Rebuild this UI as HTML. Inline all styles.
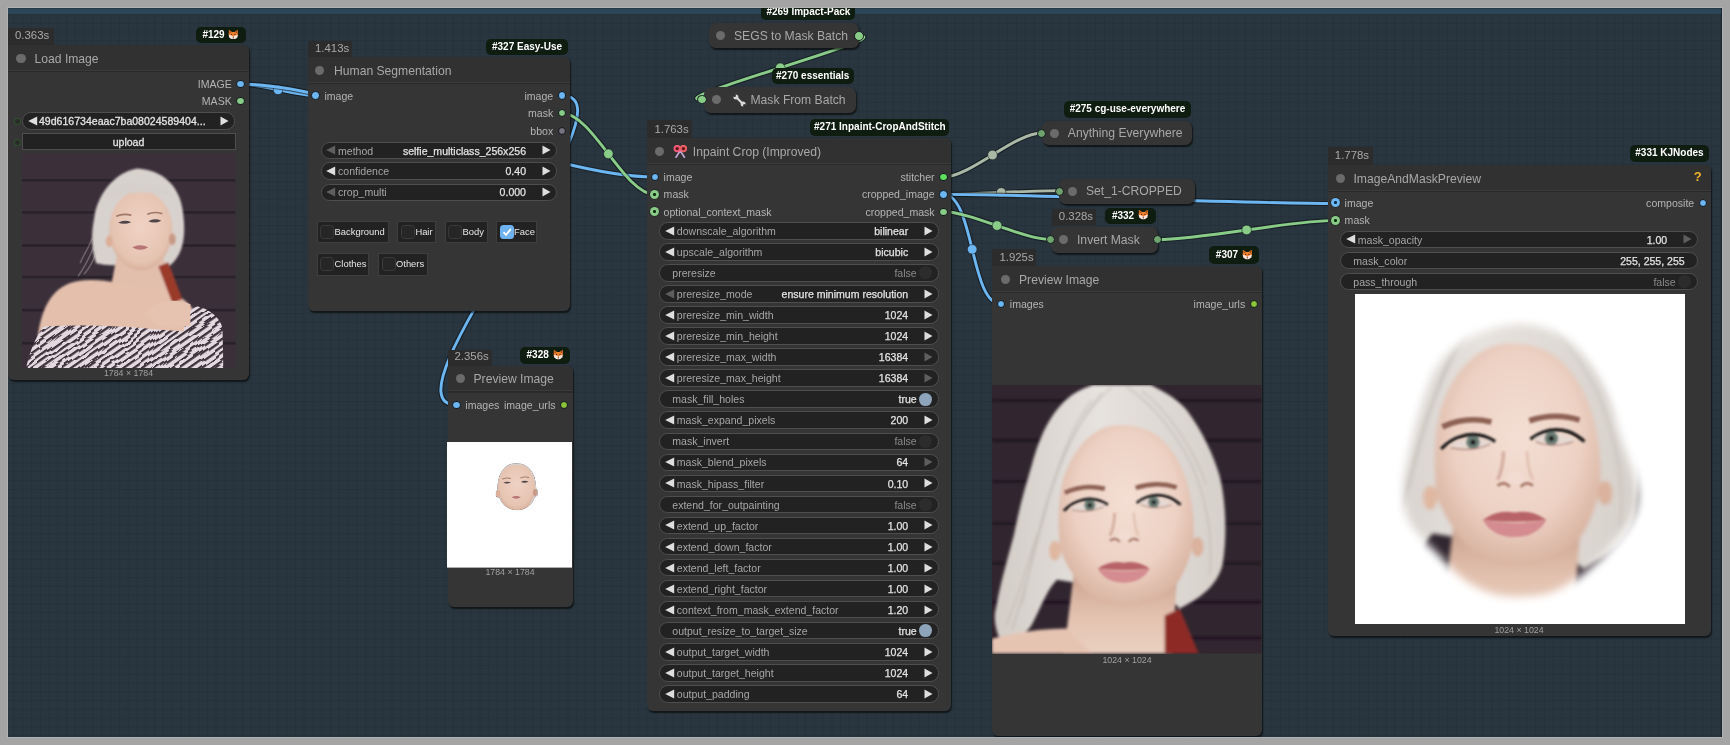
<!DOCTYPE html>
<html><head><meta charset="utf-8"><style>
html,body{margin:0;padding:0;width:1730px;height:745px;overflow:hidden;background:#a5a4a4}
.frame{position:absolute;left:0;top:0;width:1730px;height:745px;background:#a5a4a4}
.canvas{position:absolute;left:8px;top:8px;width:1714px;height:729px;overflow:hidden;background-color:#29363f;
background-image:linear-gradient(to right, rgba(10,20,28,0.12) 1px, transparent 1px),linear-gradient(to bottom, rgba(10,20,28,0.12) 1px, transparent 1px);
background-size:8.8px 8.8px;background-position:-3.5px -2.9px}
.inner{position:absolute;left:-8px;top:-8px;width:1730px;height:745px;will-change:transform}
.a{position:absolute}
.t{position:absolute;white-space:pre;font-family:"Liberation Sans", sans-serif}
.node{background:#353535;border-radius:0 6px 6px 6px;box-shadow:1px 1.5px 1.5px rgba(0,0,0,0.6)}
.wid{background:#222222;border:1px solid #4e4e4e;box-sizing:border-box}
.badge{background:#0f1c10;border-radius:5px;color:#fff;font-family:"Liberation Sans", sans-serif;font-weight:700;text-align:center;white-space:pre}
.fox{display:inline-block;vertical-align:-1.5px;margin-left:1px}
</style></head><body>
<div class="frame"></div><div class="a" style="left:7px;top:7px;width:1716px;height:731px;background:#aeb2b5"></div>
<div class="canvas"><div class="inner">
<div class="a" style="left:0;top:8px;width:1730px;height:6px;background:#2c4659"></div><div class="a" style="left:0;top:8px;width:1730px;height:1px;background:#283846"></div><div class="a" style="left:1720.5px;top:0;width:1.5px;height:745px;background:#1b242c"></div>
<svg class="a" style="left:0;top:0" width="1730" height="745" viewBox="0 0 1730 745"><path d="M240.5 84 C259.5 84 296.6 95.6 315.6 95.6" fill="none" stroke="#0d1116" stroke-opacity="0.55" stroke-width="5.2"/><path d="M240.5 84 C259.5 84 296.6 95.6 315.6 95.6" fill="none" stroke="#6cb6f2" stroke-width="2.9"/><circle cx="278.05" cy="89.8" r="4.8" fill="#6cb6f2" stroke="#0d1116" stroke-opacity="0.5" stroke-width="1"/><path d="M240.5 84 C346.65 84 548.65 177 654.8 177" fill="none" stroke="#0d1116" stroke-opacity="0.55" stroke-width="5.2"/><path d="M240.5 84 C346.65 84 548.65 177 654.8 177" fill="none" stroke="#6cb6f2" stroke-width="2.9"/><circle cx="447.65" cy="130.5" r="4.8" fill="#6cb6f2" stroke="#0d1116" stroke-opacity="0.5" stroke-width="1"/><path d="M562 95.6 C643.72 95.6 374.78 405 456.5 405" fill="none" stroke="#0d1116" stroke-opacity="0.55" stroke-width="5.2"/><path d="M562 95.6 C643.72 95.6 374.78 405 456.5 405" fill="none" stroke="#6cb6f2" stroke-width="2.9"/><circle cx="509.25" cy="250.3" r="4.8" fill="#6cb6f2" stroke="#0d1116" stroke-opacity="0.5" stroke-width="1"/><path d="M562 113.3 C592.81 113.3 623.99 194.4 654.8 194.4" fill="none" stroke="#0d1116" stroke-opacity="0.55" stroke-width="5.2"/><path d="M562 113.3 C592.81 113.3 623.99 194.4 654.8 194.4" fill="none" stroke="#88cc88" stroke-width="2.9"/><circle cx="608.4" cy="153.85" r="4.8" fill="#88cc88" stroke="#0d1116" stroke-opacity="0.5" stroke-width="1"/><path d="M858.8 36 C901.17 36 659.33 99.6 701.7 99.6" fill="none" stroke="#0d1116" stroke-opacity="0.55" stroke-width="5.2"/><path d="M858.8 36 C901.17 36 659.33 99.6 701.7 99.6" fill="none" stroke="#88cc88" stroke-width="2.9"/><circle cx="780.25" cy="67.8" r="4.8" fill="#88cc88" stroke="#0d1116" stroke-opacity="0.5" stroke-width="1"/><path d="M943.4 177 C970.3 177 1014.7 133 1041.6 133" fill="none" stroke="#0d1116" stroke-opacity="0.55" stroke-width="5.2"/><path d="M943.4 177 C970.3 177 1014.7 133 1041.6 133" fill="none" stroke="#aab8a6" stroke-width="2.9"/><circle cx="992.5" cy="155" r="4.8" fill="#aab8a6" stroke="#0d1116" stroke-opacity="0.5" stroke-width="1"/><path d="M943.4 194.4 C972.32 194.4 1030.08 190.6 1059 190.6" fill="none" stroke="#0d1116" stroke-opacity="0.55" stroke-width="5.2"/><path d="M943.4 194.4 C972.32 194.4 1030.08 190.6 1059 190.6" fill="none" stroke="#aab8a6" stroke-width="2.9"/><circle cx="1001.2" cy="192.5" r="4.8" fill="#aab8a6" stroke="#0d1116" stroke-opacity="0.5" stroke-width="1"/><path d="M943.4 194.4 C1041.58 194.4 1237.82 203.5 1336 203.5" fill="none" stroke="#0d1116" stroke-opacity="0.55" stroke-width="5.2"/><path d="M943.4 194.4 C1041.58 194.4 1237.82 203.5 1336 203.5" fill="none" stroke="#6cb6f2" stroke-width="2.9"/><circle cx="1139.7" cy="198.95" r="4.8" fill="#6cb6f2" stroke="#0d1116" stroke-opacity="0.5" stroke-width="1"/><path d="M943.4 194.4 C974.4 194.4 970 304.2 1001 304.2" fill="none" stroke="#0d1116" stroke-opacity="0.55" stroke-width="5.2"/><path d="M943.4 194.4 C974.4 194.4 970 304.2 1001 304.2" fill="none" stroke="#6cb6f2" stroke-width="2.9"/><circle cx="972.2" cy="249.3" r="4.8" fill="#6cb6f2" stroke="#0d1116" stroke-opacity="0.5" stroke-width="1"/><path d="M943.4 211.7 C971.11 211.7 1022.99 239.5 1050.7 239.5" fill="none" stroke="#0d1116" stroke-opacity="0.55" stroke-width="5.2"/><path d="M943.4 211.7 C971.11 211.7 1022.99 239.5 1050.7 239.5" fill="none" stroke="#88cc88" stroke-width="2.9"/><circle cx="997.05" cy="225.6" r="4.8" fill="#88cc88" stroke="#0d1116" stroke-opacity="0.5" stroke-width="1"/><path d="M1157.3 239.5 C1202.23 239.5 1291.07 220.4 1336 220.4" fill="none" stroke="#0d1116" stroke-opacity="0.55" stroke-width="5.2"/><path d="M1157.3 239.5 C1202.23 239.5 1291.07 220.4 1336 220.4" fill="none" stroke="#88cc88" stroke-width="2.9"/><circle cx="1246.65" cy="229.95" r="4.8" fill="#88cc88" stroke="#0d1116" stroke-opacity="0.5" stroke-width="1"/></svg>
<div class="a" style="left:4px;top:28px;width:50px;height:17.9px;background:#2c2c2c"></div>
<div class="t" style="left:15px;top:29.49px;font-size:11.4px;line-height:13.11px;color:#a9a9a9;font-weight:400;">0.363s</div>
<div class="a node" style="left:8px;top:44.9px;width:241px;height:335.6px"></div>
<div class="a" style="left:8px;top:44.9px;width:241px;height:26.5px;background:#313131;border-radius:0 6px 0 0"></div>
<div class="a" style="left:16.4px;top:53.55px;width:9.2px;height:9.2px;border-radius:50%;background:#6b6b6b"></div>
<div class="a" style="left:8px;top:69.8px;width:241px;height:1px;background:#3b3b3b"></div><div class="a" style="left:8px;top:70.8px;width:241px;height:1.2px;background:#2a2a2a"></div>
<div class="t" style="left:34.5px;top:52.85px;font-size:12.15px;line-height:13.97px;color:#a8a8a8;font-weight:400;">Load Image</div>
<div class="a" style="left:236.3px;top:79.8px;width:6.4px;height:6.4px;border-radius:50%;background:#6cb6f2;border:1.0px solid #11161b;box-sizing:content-box"></div>
<div class="t" style="left:-368.3px;width:600px;text-align:right;top:77.97px;font-size:10.56px;line-height:12.14px;color:#b4b4b4;font-weight:400;">IMAGE</div>
<div class="a" style="left:236.3px;top:97px;width:6.4px;height:6.4px;border-radius:50%;background:#88cc88;border:1.0px solid #11161b;box-sizing:content-box"></div>
<div class="t" style="left:-368.3px;width:600px;text-align:right;top:95.17px;font-size:10.56px;line-height:12.14px;color:#b4b4b4;font-weight:400;">MASK</div>
<div class="a wid" style="left:21.7px;top:112px;width:213.8px;height:17.6px;border-radius:8.8px"></div>
<svg class="a" style="left:27.5px;top:115.9px" width="10" height="10" viewBox="0 0 10 10"><path d="M9.2 0.4 L0.2 5 L9.2 9.6Z" fill="#dedede"/></svg>
<svg class="a" style="left:220px;top:115.9px" width="9" height="10" viewBox="0 0 9 10"><path d="M0.5 0.5 L8.5 5 L0.5 9.5Z" fill="#dedede"/></svg>
<div class="t" style="left:39px;top:114.97px;font-size:10.56px;line-height:12.14px;color:#e2e2e2;font-weight:400;-webkit-text-stroke:0.3px #e2e2e2">49d616734eaac7ba08024589404...</div>
<div class="a" style="left:14px;top:118px;width:4.5px;height:4.5px;border-radius:50%;border:1px solid #2e5a2e;background:#2a2a2a"></div>
<div class="a" style="left:14px;top:139px;width:4.5px;height:4.5px;border-radius:50%;border:1px solid #2e5a2e;background:#2a2a2a"></div>
<div class="a" style="left:21.5px;top:132.6px;width:214px;height:17.4px;background:#222;border:1px solid #4e4e4e;box-sizing:border-box"></div>
<div class="t" style="left:-171.5px;width:600px;text-align:center;top:135.67px;font-size:10.56px;line-height:12.14px;color:#e2e2e2;font-weight:400;-webkit-text-stroke:0.3px #e2e2e2">upload</div>
<svg class="a" style="left:22px;top:153px" width="213.5" height="214.5" viewBox="0 0 213 214" preserveAspectRatio="none"><defs><filter id="pfb1" x="-20%" y="-20%" width="140%" height="140%"><feGaussianBlur stdDeviation="1.3"/></filter>
<filter id="pfb2" x="-20%" y="-20%" width="140%" height="140%"><feGaussianBlur stdDeviation="0.7"/></filter>
<radialGradient id="pfface" cx="0.5" cy="0.45" r="0.6"><stop offset="0" stop-color="#efd2c4"/><stop offset="0.75" stop-color="#e6c4b2"/><stop offset="1" stop-color="#d2a892"/></radialGradient>
<pattern id="pfzeb" width="6" height="6" patternUnits="userSpaceOnUse" patternTransform="rotate(-35)"><rect width="6" height="6" fill="#e2d8de"/><rect y="0" width="6" height="2.3" fill="#3e303b"/></pattern><filter id="pfwav" x="0" y="0" width="1" height="1"><feTurbulence type="fractalNoise" baseFrequency="0.045" numOctaves="2" seed="5"/><feDisplacementMap in="SourceGraphic" scale="9"/><feGaussianBlur stdDeviation="0.35"/></filter></defs><rect width="213" height="214" fill="#3b2f3a"/>
<g fill="#2a2129" filter="url(#pfb2)"><rect y="26" width="213" height="2.6"/><rect y="58" width="213" height="2.6"/><rect y="91" width="213" height="2.6"/><rect y="122.5" width="213" height="2.6"/><rect y="155.5" width="213" height="2.6"/><rect y="188.5" width="213" height="2.6"/></g>
<g filter="url(#pfb1)">
<path d="M74 110 C69 95 69 80 72 65 C75 42 92 19 115 15.5 C140 17 156 32 160 55 C164 80 162 100 148 112 L90 112 C84 112 79 111 74 110Z" fill="#d8d2ce"/>
<path d="M95 100 L141 100 L146 140 L88 138Z" fill="#e2bead"/>
<ellipse cx="118.5" cy="77" rx="31.5" ry="40" fill="url(#pfface)"/>
<ellipse cx="87" cy="88" rx="3.5" ry="6" fill="#dcae98"/><ellipse cx="150" cy="86" rx="3.5" ry="6" fill="#c89a86"/>
<path d="M84 38 C95 28 140 26 152 45 C140 38 100 36 84 48Z" fill="#d6d0cc"/>
<path d="M16 182 C20 152 32 132 55 128 C78 124 98 131 120 134 C142 134 158 140 170 155 L174 180 L16 184Z" fill="#e4c0ac"/>
<path d="M136 113 L146 109 L160 146 L150 150Z" fill="#9a3a2c"/>
</g>
<path d="M72 92 C68 104 62 114 56 123 M75 96 C72 106 68 114 62 121 M70 85 C66 96 60 104 58 110" stroke="#c8c0c0" stroke-width="1.6" fill="none" opacity="0.35"/>
<g filter="url(#pfb2)">
<path d="M96 69.5 Q102 66 109 69 Q102 72 96 69.5Z" fill="#4e4448"/><path d="M126 68 Q132 64.5 139 67.5 Q132 71 126 68Z" fill="#4e4448"/>
<path d="M94 63 Q101 60 109 62 M125 61 Q132 58 140 60.5" stroke="#a07866" stroke-width="1.6" fill="none"/>
<path d="M110 94 Q118 90 126 94 Q118 99 110 94Z" fill="#b87474"/>
</g>
<clipPath id="pfzc"><path d="M4 215 C8 196 14 184 21 173 C60 171 100 173 124 175 L161 178 C163 165 166 156 175 153 C188 156 198 165 200 175 L201 215Z"/></clipPath><g clip-path="url(#pfzc)"><rect x="-10" y="140" width="233" height="85" fill="url(#pfzeb)" filter="url(#pfwav)"/></g>
<path d="M122 160 C132 147 152 144 168 151 L168 172 C150 177 130 173 122 160Z" fill="#e6c2b0" filter="url(#pfb2)"/></svg>
<div class="t" style="left:-171.5px;width:600px;text-align:center;top:368.09px;font-size:8.8px;line-height:10.12px;color:#a0a0a0;font-weight:400;">1784 × 1784</div>
<div class="a badge" style="left:195.5px;top:26.6px;width:50.5px;height:16.9px;line-height:16.9px;font-size:10px">#129 <svg class="fox" width="10.6" height="10.6" viewBox="0 0 12 12"><path d="M1 0.8 L4.6 3.4 L7.4 3.4 L11 0.8 L11.2 6.8 L6 11.4 L0.8 6.8Z" fill="#f0802e"/><path d="M1.6 1.8 L3.6 3.6 L1.8 4.8Z M10.4 1.8 L8.4 3.6 L10.2 4.8Z" fill="#5a2a10" opacity="0.6"/><path d="M0.8 6.8 C2.5 6.6 4.5 7.4 6 8.4 C7.5 7.4 9.5 6.6 11.2 6.8 L10.6 9.6 C9 11.2 7.5 11.6 6 11.6 C4.5 11.6 3 11.2 1.4 9.6Z" fill="#f8e4dc"/><circle cx="4.1" cy="6" r="0.7" fill="#3a1a0a"/><circle cx="7.9" cy="6" r="0.7" fill="#3a1a0a"/><path d="M6 8.6 L6 10.8" stroke="#5a2a10" stroke-width="0.9"/></svg></div>
<div class="a" style="left:308px;top:40.5px;width:43.5px;height:17.5px;background:#2c2c2c"></div>
<div class="t" style="left:315px;top:41.59px;font-size:11.4px;line-height:13.11px;color:#a9a9a9;font-weight:400;">1.413s</div>
<div class="a node" style="left:308px;top:57px;width:262px;height:254px"></div>
<div class="a" style="left:308px;top:57px;width:262px;height:26.2px;background:#313131;border-radius:0 6px 0 0"></div>
<div class="a" style="left:315.3px;top:65.5px;width:9.2px;height:9.2px;border-radius:50%;background:#6b6b6b"></div>
<div class="a" style="left:308px;top:81.6px;width:262px;height:1px;background:#3b3b3b"></div><div class="a" style="left:308px;top:82.6px;width:262px;height:1.2px;background:#2a2a2a"></div>
<div class="t" style="left:334px;top:64.8px;font-size:12.15px;line-height:13.97px;color:#a8a8a8;font-weight:400;">Human Segmentation</div>
<div class="a" style="left:311.4px;top:91.4px;width:6.4px;height:6.4px;border-radius:50%;background:#6cb6f2;border:1.0px solid #11161b;box-sizing:content-box"></div>
<div class="t" style="left:324.4px;top:89.57px;font-size:10.56px;line-height:12.14px;color:#b4b4b4;font-weight:400;">image</div>
<div class="a" style="left:557.8px;top:91.4px;width:6.4px;height:6.4px;border-radius:50%;background:#6cb6f2;border:1.0px solid #11161b;box-sizing:content-box"></div>
<div class="t" style="left:-46.8px;width:600px;text-align:right;top:89.57px;font-size:10.56px;line-height:12.14px;color:#b4b4b4;font-weight:400;">image</div>
<div class="a" style="left:557.8px;top:109.1px;width:6.4px;height:6.4px;border-radius:50%;background:#88cc88;border:1.0px solid #11161b;box-sizing:content-box"></div>
<div class="t" style="left:-46.8px;width:600px;text-align:right;top:107.27px;font-size:10.56px;line-height:12.14px;color:#b4b4b4;font-weight:400;">mask</div>
<div class="a" style="left:557.8px;top:126.8px;width:6.4px;height:6.4px;border-radius:50%;background:#77727e;border:1.0px solid #11161b;box-sizing:content-box"></div>
<div class="t" style="left:-46.8px;width:600px;text-align:right;top:124.97px;font-size:10.56px;line-height:12.14px;color:#b4b4b4;font-weight:400;">bbox</div>
<div class="a wid" style="left:320.5px;top:141.6px;width:236px;height:17.5px;border-radius:8.75px"></div>
<svg class="a" style="left:326px;top:145.35px" width="10" height="10" viewBox="0 0 10 10"><path d="M9.2 0.4 L0.2 5 L9.2 9.6Z" fill="#5e5e5e"/></svg>
<svg class="a" style="left:541.5px;top:145.35px" width="9" height="10" viewBox="0 0 9 10"><path d="M0.5 0.5 L8.5 5 L0.5 9.5Z" fill="#dedede"/></svg>
<div class="t" style="left:338px;top:144.52px;font-size:10.56px;line-height:12.14px;color:#a6a6a6;font-weight:400;">method</div>
<div class="t" style="left:-74px;width:600px;text-align:right;top:144.52px;font-size:10.56px;line-height:12.14px;color:#e2e2e2;font-weight:400;-webkit-text-stroke:0.25px #e2e2e2">selfie_multiclass_256x256</div>
<div class="a wid" style="left:320.5px;top:162.4px;width:236px;height:17.5px;border-radius:8.75px"></div>
<svg class="a" style="left:326px;top:166.15px" width="10" height="10" viewBox="0 0 10 10"><path d="M9.2 0.4 L0.2 5 L9.2 9.6Z" fill="#dedede"/></svg>
<svg class="a" style="left:541.5px;top:166.15px" width="9" height="10" viewBox="0 0 9 10"><path d="M0.5 0.5 L8.5 5 L0.5 9.5Z" fill="#dedede"/></svg>
<div class="t" style="left:338px;top:165.32px;font-size:10.56px;line-height:12.14px;color:#a6a6a6;font-weight:400;">confidence</div>
<div class="t" style="left:-74px;width:600px;text-align:right;top:165.32px;font-size:10.56px;line-height:12.14px;color:#e2e2e2;font-weight:400;-webkit-text-stroke:0.25px #e2e2e2">0.40</div>
<div class="a wid" style="left:320.5px;top:183.5px;width:236px;height:17.5px;border-radius:8.75px"></div>
<svg class="a" style="left:326px;top:187.25px" width="10" height="10" viewBox="0 0 10 10"><path d="M9.2 0.4 L0.2 5 L9.2 9.6Z" fill="#5e5e5e"/></svg>
<svg class="a" style="left:541.5px;top:187.25px" width="9" height="10" viewBox="0 0 9 10"><path d="M0.5 0.5 L8.5 5 L0.5 9.5Z" fill="#dedede"/></svg>
<div class="t" style="left:338px;top:186.42px;font-size:10.56px;line-height:12.14px;color:#a6a6a6;font-weight:400;">crop_multi</div>
<div class="t" style="left:-74px;width:600px;text-align:right;top:186.42px;font-size:10.56px;line-height:12.14px;color:#e2e2e2;font-weight:400;-webkit-text-stroke:0.25px #e2e2e2">0.000</div>
<div class="a" style="left:316.6px;top:220.6px;width:72.4px;height:22.7px;background:#222;border:1px solid #3e3e3e;box-sizing:border-box"></div>
<div class="a" style="left:320.1px;top:224.95px;width:14px;height:14px;border-radius:3.5px;background:#262626;border:1px solid #3a3a3a;box-sizing:border-box"></div>
<div class="t" style="left:334.6px;top:226.79px;font-size:9.4px;line-height:10.81px;color:#e6e6e6;font-weight:400;">Background</div>
<div class="a" style="left:397.4px;top:220.6px;width:38.6px;height:22.7px;background:#222;border:1px solid #3e3e3e;box-sizing:border-box"></div>
<div class="a" style="left:400.9px;top:224.95px;width:14px;height:14px;border-radius:3.5px;background:#262626;border:1px solid #3a3a3a;box-sizing:border-box"></div>
<div class="t" style="left:415.4px;top:226.79px;font-size:9.4px;line-height:10.81px;color:#e6e6e6;font-weight:400;">Hair</div>
<div class="a" style="left:444.5px;top:220.6px;width:43.5px;height:22.7px;background:#222;border:1px solid #3e3e3e;box-sizing:border-box"></div>
<div class="a" style="left:448px;top:224.95px;width:14px;height:14px;border-radius:3.5px;background:#262626;border:1px solid #3a3a3a;box-sizing:border-box"></div>
<div class="t" style="left:462.5px;top:226.79px;font-size:9.4px;line-height:10.81px;color:#e6e6e6;font-weight:400;">Body</div>
<div class="a" style="left:496px;top:220.6px;width:40.5px;height:22.7px;background:#222;border:1px solid #3e3e3e;box-sizing:border-box"></div>
<div class="a" style="left:499.5px;top:224.95px;width:14px;height:14px;border-radius:3.5px;background:#6fb2f0"></div>
<svg class="a" style="left:499.5px;top:224.95px" width="14" height="14" viewBox="0 0 14 14"><path d="M3.5 7.2 L6 9.8 L10.8 4.2" stroke="#fff" stroke-width="1.8" fill="none"/></svg>
<div class="t" style="left:514px;top:226.79px;font-size:9.4px;line-height:10.81px;color:#e6e6e6;font-weight:400;">Face</div>
<div class="a" style="left:316.6px;top:252.9px;width:52.9px;height:23.1px;background:#222;border:1px solid #3e3e3e;box-sizing:border-box"></div>
<div class="a" style="left:320.1px;top:257.45px;width:14px;height:14px;border-radius:3.5px;background:#262626;border:1px solid #3a3a3a;box-sizing:border-box"></div>
<div class="t" style="left:334.6px;top:259.29px;font-size:9.4px;line-height:10.81px;color:#e6e6e6;font-weight:400;">Clothes</div>
<div class="a" style="left:378px;top:252.9px;width:50px;height:23.1px;background:#222;border:1px solid #3e3e3e;box-sizing:border-box"></div>
<div class="a" style="left:381.5px;top:257.45px;width:14px;height:14px;border-radius:3.5px;background:#262626;border:1px solid #3a3a3a;box-sizing:border-box"></div>
<div class="t" style="left:396px;top:259.29px;font-size:9.4px;line-height:10.81px;color:#e6e6e6;font-weight:400;">Others</div>
<div class="a badge" style="left:486px;top:38.5px;width:82px;height:16.1px;line-height:16.1px;font-size:10px">#327 Easy-Use</div>
<div class="a" style="left:447.5px;top:349.8px;width:44.5px;height:16.7px;background:#2c2c2c"></div>
<div class="t" style="left:454.5px;top:350.09px;font-size:11.4px;line-height:13.11px;color:#a9a9a9;font-weight:400;">2.356s</div>
<div class="a node" style="left:447.5px;top:365.5px;width:125px;height:241.5px"></div>
<div class="a" style="left:447.5px;top:365.5px;width:125px;height:26.5px;background:#313131;border-radius:0 6px 0 0"></div>
<div class="a" style="left:455.7px;top:374.15px;width:9.2px;height:9.2px;border-radius:50%;background:#6b6b6b"></div>
<div class="a" style="left:447.5px;top:390.4px;width:125px;height:1px;background:#3b3b3b"></div><div class="a" style="left:447.5px;top:391.4px;width:125px;height:1.2px;background:#2a2a2a"></div>
<div class="t" style="left:473.5px;top:373.45px;font-size:12.15px;line-height:13.97px;color:#a8a8a8;font-weight:400;">Preview Image</div>
<div class="a" style="left:452.3px;top:400.8px;width:6.4px;height:6.4px;border-radius:50%;background:#6cb6f2;border:1.0px solid #11161b;box-sizing:content-box"></div>
<div class="t" style="left:465.3px;top:398.97px;font-size:10.56px;line-height:12.14px;color:#b4b4b4;font-weight:400;">images</div>
<div class="a" style="left:560.1px;top:400.8px;width:6.4px;height:6.4px;border-radius:50%;background:#8cc43c;border:1.0px solid #11161b;box-sizing:content-box"></div>
<div class="t" style="left:-44.5px;width:600px;text-align:right;top:398.97px;font-size:10.56px;line-height:12.14px;color:#b4b4b4;font-weight:400;">image_urls</div>
<svg class="a" style="left:447.3px;top:442px" width="125" height="125.6" viewBox="0 0 125 125.5" preserveAspectRatio="none"><defs><filter id="psb1" x="-20%" y="-20%" width="140%" height="140%"><feGaussianBlur stdDeviation="1.3"/></filter>
<filter id="psb2" x="-20%" y="-20%" width="140%" height="140%"><feGaussianBlur stdDeviation="0.7"/></filter>
<radialGradient id="psface" cx="0.5" cy="0.45" r="0.6"><stop offset="0" stop-color="#efd2c4"/><stop offset="0.75" stop-color="#e6c4b2"/><stop offset="1" stop-color="#d2a892"/></radialGradient>
<pattern id="pszeb" width="6" height="6" patternUnits="userSpaceOnUse" patternTransform="rotate(-35)"><rect width="6" height="6" fill="#e2d8de"/><rect y="0" width="6" height="2.3" fill="#3e303b"/></pattern><filter id="pswav" x="0" y="0" width="1" height="1"><feTurbulence type="fractalNoise" baseFrequency="0.045" numOctaves="2" seed="5"/><feDisplacementMap in="SourceGraphic" scale="9"/><feGaussianBlur stdDeviation="0.35"/></filter></defs>
<defs><clipPath id="psclip"><path d="M86 80 C86 55 98 36 118 36 C140 36 152 55 152 80 C152 100 138 116 120 116 C100 116 87 100 86 80Z"/><ellipse cx="87" cy="88" rx="4" ry="6.5"/><ellipse cx="151" cy="86" rx="4" ry="6.5"/></clipPath></defs>
<rect width="125" height="125.5" fill="#ffffff"/>
<g transform="scale(0.58685)"><g clip-path="url(#psclip)"><rect width="213" height="214" fill="#3b2f3a"/>
<g fill="#2a2129" filter="url(#psb2)"><rect y="26" width="213" height="2.6"/><rect y="58" width="213" height="2.6"/><rect y="91" width="213" height="2.6"/><rect y="122.5" width="213" height="2.6"/><rect y="155.5" width="213" height="2.6"/><rect y="188.5" width="213" height="2.6"/></g>
<g filter="url(#psb1)">
<path d="M74 110 C69 95 69 80 72 65 C75 42 92 19 115 15.5 C140 17 156 32 160 55 C164 80 162 100 148 112 L90 112 C84 112 79 111 74 110Z" fill="#d8d2ce"/>
<path d="M95 100 L141 100 L146 140 L88 138Z" fill="#e2bead"/>
<ellipse cx="118.5" cy="77" rx="31.5" ry="40" fill="url(#psface)"/>
<ellipse cx="87" cy="88" rx="3.5" ry="6" fill="#dcae98"/><ellipse cx="150" cy="86" rx="3.5" ry="6" fill="#c89a86"/>
<path d="M84 38 C95 28 140 26 152 45 C140 38 100 36 84 48Z" fill="#d6d0cc"/>
<path d="M16 182 C20 152 32 132 55 128 C78 124 98 131 120 134 C142 134 158 140 170 155 L174 180 L16 184Z" fill="#e4c0ac"/>
<path d="M136 113 L146 109 L160 146 L150 150Z" fill="#9a3a2c"/>
</g>
<path d="M72 92 C68 104 62 114 56 123 M75 96 C72 106 68 114 62 121 M70 85 C66 96 60 104 58 110" stroke="#c8c0c0" stroke-width="1.6" fill="none" opacity="0.35"/>
<g filter="url(#psb2)">
<path d="M96 69.5 Q102 66 109 69 Q102 72 96 69.5Z" fill="#4e4448"/><path d="M126 68 Q132 64.5 139 67.5 Q132 71 126 68Z" fill="#4e4448"/>
<path d="M94 63 Q101 60 109 62 M125 61 Q132 58 140 60.5" stroke="#a07866" stroke-width="1.6" fill="none"/>
<path d="M110 94 Q118 90 126 94 Q118 99 110 94Z" fill="#b87474"/>
</g>
<clipPath id="pszc"><path d="M4 215 C8 196 14 184 21 173 C60 171 100 173 124 175 L161 178 C163 165 166 156 175 153 C188 156 198 165 200 175 L201 215Z"/></clipPath><g clip-path="url(#pszc)"><rect x="-10" y="140" width="233" height="85" fill="url(#pszeb)" filter="url(#pswav)"/></g>
<path d="M122 160 C132 147 152 144 168 151 L168 172 C150 177 130 173 122 160Z" fill="#e6c2b0" filter="url(#psb2)"/></g></g></svg>
<div class="t" style="left:210px;width:600px;text-align:center;top:567.39px;font-size:8.8px;line-height:10.12px;color:#a0a0a0;font-weight:400;">1784 × 1784</div>
<div class="a badge" style="left:520px;top:347px;width:49.7px;height:16.8px;line-height:16.8px;font-size:10px">#328 <svg class="fox" width="10.6" height="10.6" viewBox="0 0 12 12"><path d="M1 0.8 L4.6 3.4 L7.4 3.4 L11 0.8 L11.2 6.8 L6 11.4 L0.8 6.8Z" fill="#f0802e"/><path d="M1.6 1.8 L3.6 3.6 L1.8 4.8Z M10.4 1.8 L8.4 3.6 L10.2 4.8Z" fill="#5a2a10" opacity="0.6"/><path d="M0.8 6.8 C2.5 6.6 4.5 7.4 6 8.4 C7.5 7.4 9.5 6.6 11.2 6.8 L10.6 9.6 C9 11.2 7.5 11.6 6 11.6 C4.5 11.6 3 11.2 1.4 9.6Z" fill="#f8e4dc"/><circle cx="4.1" cy="6" r="0.7" fill="#3a1a0a"/><circle cx="7.9" cy="6" r="0.7" fill="#3a1a0a"/><path d="M6 8.6 L6 10.8" stroke="#5a2a10" stroke-width="0.9"/></svg></div>
<div class="a node" style="left:709px;top:23.4px;width:149.5px;height:24.9px;border-radius:7px"></div>
<div class="a" style="left:716px;top:31.25px;width:9.2px;height:9.2px;border-radius:50%;background:#6b6b6b"></div>
<div class="t" style="left:734px;top:29.65px;font-size:12.15px;line-height:13.97px;color:#a8a8a8;font-weight:400;">SEGS to Mask Batch</div>
<div class="a" style="left:853.9px;top:31.1px;width:7.8px;height:7.8px;border-radius:50%;background:#88cc88;border:1.0px solid #11161b;box-sizing:content-box"></div>
<div class="a badge" style="left:761.3px;top:3px;width:94.2px;height:17px;line-height:17px;font-size:10px">#269 Impact-Pack</div>
<div class="a node" style="left:704px;top:87px;width:151.5px;height:25.7px;border-radius:7px"></div>
<div class="a" style="left:712.1px;top:95.25px;width:9.2px;height:9.2px;border-radius:50%;background:#6b6b6b"></div>
<div class="t" style="left:750.5px;top:93.65px;font-size:12.15px;line-height:13.97px;color:#a8a8a8;font-weight:400;">Mask From Batch</div>
<svg class="a" style="left:732.5px;top:93.5px" width="13" height="13" viewBox="0 0 13 13"><path d="M3 3 L10 10" stroke="#d8d8d8" stroke-width="2.1"/><circle cx="2.9" cy="2.9" r="2.5" fill="#d8d8d8"/><circle cx="10.1" cy="10.1" r="2.5" fill="#d8d8d8"/><circle cx="1.5" cy="1.5" r="1.5" fill="#353535"/><circle cx="11.5" cy="11.5" r="1.5" fill="#353535"/></svg>
<div class="a" style="left:696.8px;top:94.7px;width:7.8px;height:7.8px;border-radius:50%;background:#88cc88;border:1.0px solid #11161b;box-sizing:content-box"></div>
<div class="a badge" style="left:771.5px;top:68.4px;width:82.5px;height:15.6px;line-height:15.6px;font-size:10px">#270 essentials</div>
<div class="a" style="left:647.4px;top:120.4px;width:44.6px;height:18.9px;background:#2c2c2c"></div>
<div class="t" style="left:654.4px;top:122.89px;font-size:11.4px;line-height:13.11px;color:#a9a9a9;font-weight:400;">1.763s</div>
<div class="a node" style="left:647.4px;top:138.3px;width:304.1px;height:573.2px"></div>
<div class="a" style="left:647.4px;top:138.3px;width:304.1px;height:26.5px;background:#313131;border-radius:0 6px 0 0"></div>
<div class="a" style="left:654.6px;top:146.95px;width:9.2px;height:9.2px;border-radius:50%;background:#6b6b6b"></div>
<div class="a" style="left:647.4px;top:163.2px;width:304.1px;height:1px;background:#3b3b3b"></div><div class="a" style="left:647.4px;top:164.2px;width:304.1px;height:1.2px;background:#2a2a2a"></div>
<div class="t" style="left:692.8px;top:146.25px;font-size:12.15px;line-height:13.97px;color:#a8a8a8;font-weight:400;">Inpaint Crop (Improved)</div>
<svg class="a" style="left:673.3px;top:144.8px" width="15" height="14" viewBox="0 0 15 14"><path d="M7.2 5.6 L3 12.2 M7.2 5.6 L11.4 12.2" stroke="#c4a6d4" stroke-width="1.7" stroke-linecap="round"/><circle cx="4.2" cy="3.6" r="2.7" fill="#5e1418" stroke="#ec5a78" stroke-width="2"/><circle cx="10.4" cy="3.6" r="2.7" fill="#5e1418" stroke="#ec6066" stroke-width="2"/></svg>
<div class="a" style="left:650.6px;top:172.8px;width:6.4px;height:6.4px;border-radius:50%;background:#6cb6f2;border:1.0px solid #11161b;box-sizing:content-box"></div>
<div class="t" style="left:663.6px;top:170.97px;font-size:10.56px;line-height:12.14px;color:#b4b4b4;font-weight:400;">image</div>
<div class="a" style="left:650.3px;top:189.9px;width:9px;height:9px;border-radius:50%;background:#88cc88;box-shadow:0 0 0 0.6px rgba(10,10,10,0.6)"></div>
<div class="a" style="left:653.45px;top:193.05px;width:2.7px;height:2.7px;border-radius:50%;background:#0e2a0e"></div>
<div class="t" style="left:663.6px;top:188.37px;font-size:10.56px;line-height:12.14px;color:#b4b4b4;font-weight:400;">mask</div>
<div class="a" style="left:650.3px;top:207.2px;width:9px;height:9px;border-radius:50%;background:#88cc88;box-shadow:0 0 0 0.6px rgba(10,10,10,0.6)"></div>
<div class="a" style="left:653.45px;top:210.35px;width:2.7px;height:2.7px;border-radius:50%;background:#0e2a0e"></div>
<div class="t" style="left:663.6px;top:205.67px;font-size:10.56px;line-height:12.14px;color:#b4b4b4;font-weight:400;">optional_context_mask</div>
<div class="a" style="left:939.2px;top:172.8px;width:6.4px;height:6.4px;border-radius:50%;background:#5fe05f;border:1.0px solid #11161b;box-sizing:content-box"></div>
<div class="t" style="left:334.6px;width:600px;text-align:right;top:170.97px;font-size:10.56px;line-height:12.14px;color:#b4b4b4;font-weight:400;">stitcher</div>
<div class="a" style="left:939.2px;top:190.2px;width:6.4px;height:6.4px;border-radius:50%;background:#6cb6f2;border:1.0px solid #11161b;box-sizing:content-box"></div>
<div class="t" style="left:334.6px;width:600px;text-align:right;top:188.37px;font-size:10.56px;line-height:12.14px;color:#b4b4b4;font-weight:400;">cropped_image</div>
<div class="a" style="left:939.2px;top:207.5px;width:6.4px;height:6.4px;border-radius:50%;background:#88cc88;border:1.0px solid #11161b;box-sizing:content-box"></div>
<div class="t" style="left:334.6px;width:600px;text-align:right;top:205.67px;font-size:10.56px;line-height:12.14px;color:#b4b4b4;font-weight:400;">cropped_mask</div>
<div class="a wid" style="left:659.3px;top:222px;width:279.4px;height:17.5px;border-radius:8.75px"></div>
<svg class="a" style="left:664.8px;top:225.75px" width="10" height="10" viewBox="0 0 10 10"><path d="M9.2 0.4 L0.2 5 L9.2 9.6Z" fill="#dedede"/></svg>
<svg class="a" style="left:923.7px;top:225.75px" width="9" height="10" viewBox="0 0 9 10"><path d="M0.5 0.5 L8.5 5 L0.5 9.5Z" fill="#dedede"/></svg>
<div class="t" style="left:676.8px;top:224.92px;font-size:10.56px;line-height:12.14px;color:#a6a6a6;font-weight:400;">downscale_algorithm</div>
<div class="t" style="left:308.2px;width:600px;text-align:right;top:224.92px;font-size:10.56px;line-height:12.14px;color:#e2e2e2;font-weight:400;-webkit-text-stroke:0.25px #e2e2e2">bilinear</div>
<div class="a wid" style="left:659.3px;top:243.05px;width:279.4px;height:17.5px;border-radius:8.75px"></div>
<svg class="a" style="left:664.8px;top:246.8px" width="10" height="10" viewBox="0 0 10 10"><path d="M9.2 0.4 L0.2 5 L9.2 9.6Z" fill="#dedede"/></svg>
<svg class="a" style="left:923.7px;top:246.8px" width="9" height="10" viewBox="0 0 9 10"><path d="M0.5 0.5 L8.5 5 L0.5 9.5Z" fill="#dedede"/></svg>
<div class="t" style="left:676.8px;top:245.97px;font-size:10.56px;line-height:12.14px;color:#a6a6a6;font-weight:400;">upscale_algorithm</div>
<div class="t" style="left:308.2px;width:600px;text-align:right;top:245.97px;font-size:10.56px;line-height:12.14px;color:#e2e2e2;font-weight:400;-webkit-text-stroke:0.25px #e2e2e2">bicubic</div>
<div class="a wid" style="left:659.3px;top:264.1px;width:279.4px;height:17.5px;border-radius:8.75px"></div>
<div class="t" style="left:672.3px;top:267.02px;font-size:10.56px;line-height:12.14px;color:#a6a6a6;font-weight:400;">preresize</div>
<div class="t" style="left:316.7px;width:600px;text-align:right;top:267.02px;font-size:10.56px;line-height:12.14px;color:#8a8a8a;font-weight:400;">false</div>
<div class="a" style="left:918.8px;top:266.45px;width:12.8px;height:12.8px;border-radius:50%;background:#2c2c2c"></div>
<div class="a wid" style="left:659.3px;top:285.15px;width:279.4px;height:17.5px;border-radius:8.75px"></div>
<svg class="a" style="left:664.8px;top:288.9px" width="10" height="10" viewBox="0 0 10 10"><path d="M9.2 0.4 L0.2 5 L9.2 9.6Z" fill="#5e5e5e"/></svg>
<svg class="a" style="left:923.7px;top:288.9px" width="9" height="10" viewBox="0 0 9 10"><path d="M0.5 0.5 L8.5 5 L0.5 9.5Z" fill="#dedede"/></svg>
<div class="t" style="left:676.8px;top:288.07px;font-size:10.56px;line-height:12.14px;color:#a6a6a6;font-weight:400;">preresize_mode</div>
<div class="t" style="left:308.2px;width:600px;text-align:right;top:288.07px;font-size:10.56px;line-height:12.14px;color:#e2e2e2;font-weight:400;-webkit-text-stroke:0.25px #e2e2e2">ensure minimum resolution</div>
<div class="a wid" style="left:659.3px;top:306.2px;width:279.4px;height:17.5px;border-radius:8.75px"></div>
<svg class="a" style="left:664.8px;top:309.95px" width="10" height="10" viewBox="0 0 10 10"><path d="M9.2 0.4 L0.2 5 L9.2 9.6Z" fill="#dedede"/></svg>
<svg class="a" style="left:923.7px;top:309.95px" width="9" height="10" viewBox="0 0 9 10"><path d="M0.5 0.5 L8.5 5 L0.5 9.5Z" fill="#dedede"/></svg>
<div class="t" style="left:676.8px;top:309.12px;font-size:10.56px;line-height:12.14px;color:#a6a6a6;font-weight:400;">preresize_min_width</div>
<div class="t" style="left:308.2px;width:600px;text-align:right;top:309.12px;font-size:10.56px;line-height:12.14px;color:#e2e2e2;font-weight:400;-webkit-text-stroke:0.25px #e2e2e2">1024</div>
<div class="a wid" style="left:659.3px;top:327.25px;width:279.4px;height:17.5px;border-radius:8.75px"></div>
<svg class="a" style="left:664.8px;top:331px" width="10" height="10" viewBox="0 0 10 10"><path d="M9.2 0.4 L0.2 5 L9.2 9.6Z" fill="#dedede"/></svg>
<svg class="a" style="left:923.7px;top:331px" width="9" height="10" viewBox="0 0 9 10"><path d="M0.5 0.5 L8.5 5 L0.5 9.5Z" fill="#dedede"/></svg>
<div class="t" style="left:676.8px;top:330.17px;font-size:10.56px;line-height:12.14px;color:#a6a6a6;font-weight:400;">preresize_min_height</div>
<div class="t" style="left:308.2px;width:600px;text-align:right;top:330.17px;font-size:10.56px;line-height:12.14px;color:#e2e2e2;font-weight:400;-webkit-text-stroke:0.25px #e2e2e2">1024</div>
<div class="a wid" style="left:659.3px;top:348.3px;width:279.4px;height:17.5px;border-radius:8.75px"></div>
<svg class="a" style="left:664.8px;top:352.05px" width="10" height="10" viewBox="0 0 10 10"><path d="M9.2 0.4 L0.2 5 L9.2 9.6Z" fill="#dedede"/></svg>
<svg class="a" style="left:923.7px;top:352.05px" width="9" height="10" viewBox="0 0 9 10"><path d="M0.5 0.5 L8.5 5 L0.5 9.5Z" fill="#5e5e5e"/></svg>
<div class="t" style="left:676.8px;top:351.22px;font-size:10.56px;line-height:12.14px;color:#a6a6a6;font-weight:400;">preresize_max_width</div>
<div class="t" style="left:308.2px;width:600px;text-align:right;top:351.22px;font-size:10.56px;line-height:12.14px;color:#e2e2e2;font-weight:400;-webkit-text-stroke:0.25px #e2e2e2">16384</div>
<div class="a wid" style="left:659.3px;top:369.35px;width:279.4px;height:17.5px;border-radius:8.75px"></div>
<svg class="a" style="left:664.8px;top:373.1px" width="10" height="10" viewBox="0 0 10 10"><path d="M9.2 0.4 L0.2 5 L9.2 9.6Z" fill="#dedede"/></svg>
<svg class="a" style="left:923.7px;top:373.1px" width="9" height="10" viewBox="0 0 9 10"><path d="M0.5 0.5 L8.5 5 L0.5 9.5Z" fill="#5e5e5e"/></svg>
<div class="t" style="left:676.8px;top:372.27px;font-size:10.56px;line-height:12.14px;color:#a6a6a6;font-weight:400;">preresize_max_height</div>
<div class="t" style="left:308.2px;width:600px;text-align:right;top:372.27px;font-size:10.56px;line-height:12.14px;color:#e2e2e2;font-weight:400;-webkit-text-stroke:0.25px #e2e2e2">16384</div>
<div class="a wid" style="left:659.3px;top:390.4px;width:279.4px;height:17.5px;border-radius:8.75px"></div>
<div class="t" style="left:672.3px;top:393.32px;font-size:10.56px;line-height:12.14px;color:#a6a6a6;font-weight:400;">mask_fill_holes</div>
<div class="t" style="left:316.7px;width:600px;text-align:right;top:393.32px;font-size:10.56px;line-height:12.14px;color:#e2e2e2;font-weight:400;-webkit-text-stroke:0.25px #e2e2e2">true</div>
<div class="a" style="left:918.8px;top:392.75px;width:12.8px;height:12.8px;border-radius:50%;background:#8ea4ba"></div>
<div class="a wid" style="left:659.3px;top:411.45px;width:279.4px;height:17.5px;border-radius:8.75px"></div>
<svg class="a" style="left:664.8px;top:415.2px" width="10" height="10" viewBox="0 0 10 10"><path d="M9.2 0.4 L0.2 5 L9.2 9.6Z" fill="#dedede"/></svg>
<svg class="a" style="left:923.7px;top:415.2px" width="9" height="10" viewBox="0 0 9 10"><path d="M0.5 0.5 L8.5 5 L0.5 9.5Z" fill="#dedede"/></svg>
<div class="t" style="left:676.8px;top:414.37px;font-size:10.56px;line-height:12.14px;color:#a6a6a6;font-weight:400;">mask_expand_pixels</div>
<div class="t" style="left:308.2px;width:600px;text-align:right;top:414.37px;font-size:10.56px;line-height:12.14px;color:#e2e2e2;font-weight:400;-webkit-text-stroke:0.25px #e2e2e2">200</div>
<div class="a wid" style="left:659.3px;top:432.5px;width:279.4px;height:17.5px;border-radius:8.75px"></div>
<div class="t" style="left:672.3px;top:435.42px;font-size:10.56px;line-height:12.14px;color:#a6a6a6;font-weight:400;">mask_invert</div>
<div class="t" style="left:316.7px;width:600px;text-align:right;top:435.42px;font-size:10.56px;line-height:12.14px;color:#8a8a8a;font-weight:400;">false</div>
<div class="a" style="left:918.8px;top:434.85px;width:12.8px;height:12.8px;border-radius:50%;background:#2c2c2c"></div>
<div class="a wid" style="left:659.3px;top:453.55px;width:279.4px;height:17.5px;border-radius:8.75px"></div>
<svg class="a" style="left:664.8px;top:457.3px" width="10" height="10" viewBox="0 0 10 10"><path d="M9.2 0.4 L0.2 5 L9.2 9.6Z" fill="#dedede"/></svg>
<svg class="a" style="left:923.7px;top:457.3px" width="9" height="10" viewBox="0 0 9 10"><path d="M0.5 0.5 L8.5 5 L0.5 9.5Z" fill="#5e5e5e"/></svg>
<div class="t" style="left:676.8px;top:456.47px;font-size:10.56px;line-height:12.14px;color:#a6a6a6;font-weight:400;">mask_blend_pixels</div>
<div class="t" style="left:308.2px;width:600px;text-align:right;top:456.47px;font-size:10.56px;line-height:12.14px;color:#e2e2e2;font-weight:400;-webkit-text-stroke:0.25px #e2e2e2">64</div>
<div class="a wid" style="left:659.3px;top:474.6px;width:279.4px;height:17.5px;border-radius:8.75px"></div>
<svg class="a" style="left:664.8px;top:478.35px" width="10" height="10" viewBox="0 0 10 10"><path d="M9.2 0.4 L0.2 5 L9.2 9.6Z" fill="#dedede"/></svg>
<svg class="a" style="left:923.7px;top:478.35px" width="9" height="10" viewBox="0 0 9 10"><path d="M0.5 0.5 L8.5 5 L0.5 9.5Z" fill="#dedede"/></svg>
<div class="t" style="left:676.8px;top:477.52px;font-size:10.56px;line-height:12.14px;color:#a6a6a6;font-weight:400;">mask_hipass_filter</div>
<div class="t" style="left:308.2px;width:600px;text-align:right;top:477.52px;font-size:10.56px;line-height:12.14px;color:#e2e2e2;font-weight:400;-webkit-text-stroke:0.25px #e2e2e2">0.10</div>
<div class="a wid" style="left:659.3px;top:495.65px;width:279.4px;height:17.5px;border-radius:8.75px"></div>
<div class="t" style="left:672.3px;top:498.57px;font-size:10.56px;line-height:12.14px;color:#a6a6a6;font-weight:400;">extend_for_outpainting</div>
<div class="t" style="left:316.7px;width:600px;text-align:right;top:498.57px;font-size:10.56px;line-height:12.14px;color:#8a8a8a;font-weight:400;">false</div>
<div class="a" style="left:918.8px;top:498px;width:12.8px;height:12.8px;border-radius:50%;background:#2c2c2c"></div>
<div class="a wid" style="left:659.3px;top:516.7px;width:279.4px;height:17.5px;border-radius:8.75px"></div>
<svg class="a" style="left:664.8px;top:520.45px" width="10" height="10" viewBox="0 0 10 10"><path d="M9.2 0.4 L0.2 5 L9.2 9.6Z" fill="#dedede"/></svg>
<svg class="a" style="left:923.7px;top:520.45px" width="9" height="10" viewBox="0 0 9 10"><path d="M0.5 0.5 L8.5 5 L0.5 9.5Z" fill="#dedede"/></svg>
<div class="t" style="left:676.8px;top:519.62px;font-size:10.56px;line-height:12.14px;color:#a6a6a6;font-weight:400;">extend_up_factor</div>
<div class="t" style="left:308.2px;width:600px;text-align:right;top:519.62px;font-size:10.56px;line-height:12.14px;color:#e2e2e2;font-weight:400;-webkit-text-stroke:0.25px #e2e2e2">1.00</div>
<div class="a wid" style="left:659.3px;top:537.75px;width:279.4px;height:17.5px;border-radius:8.75px"></div>
<svg class="a" style="left:664.8px;top:541.5px" width="10" height="10" viewBox="0 0 10 10"><path d="M9.2 0.4 L0.2 5 L9.2 9.6Z" fill="#dedede"/></svg>
<svg class="a" style="left:923.7px;top:541.5px" width="9" height="10" viewBox="0 0 9 10"><path d="M0.5 0.5 L8.5 5 L0.5 9.5Z" fill="#dedede"/></svg>
<div class="t" style="left:676.8px;top:540.67px;font-size:10.56px;line-height:12.14px;color:#a6a6a6;font-weight:400;">extend_down_factor</div>
<div class="t" style="left:308.2px;width:600px;text-align:right;top:540.67px;font-size:10.56px;line-height:12.14px;color:#e2e2e2;font-weight:400;-webkit-text-stroke:0.25px #e2e2e2">1.00</div>
<div class="a wid" style="left:659.3px;top:558.8px;width:279.4px;height:17.5px;border-radius:8.75px"></div>
<svg class="a" style="left:664.8px;top:562.55px" width="10" height="10" viewBox="0 0 10 10"><path d="M9.2 0.4 L0.2 5 L9.2 9.6Z" fill="#dedede"/></svg>
<svg class="a" style="left:923.7px;top:562.55px" width="9" height="10" viewBox="0 0 9 10"><path d="M0.5 0.5 L8.5 5 L0.5 9.5Z" fill="#dedede"/></svg>
<div class="t" style="left:676.8px;top:561.72px;font-size:10.56px;line-height:12.14px;color:#a6a6a6;font-weight:400;">extend_left_factor</div>
<div class="t" style="left:308.2px;width:600px;text-align:right;top:561.72px;font-size:10.56px;line-height:12.14px;color:#e2e2e2;font-weight:400;-webkit-text-stroke:0.25px #e2e2e2">1.00</div>
<div class="a wid" style="left:659.3px;top:579.85px;width:279.4px;height:17.5px;border-radius:8.75px"></div>
<svg class="a" style="left:664.8px;top:583.6px" width="10" height="10" viewBox="0 0 10 10"><path d="M9.2 0.4 L0.2 5 L9.2 9.6Z" fill="#dedede"/></svg>
<svg class="a" style="left:923.7px;top:583.6px" width="9" height="10" viewBox="0 0 9 10"><path d="M0.5 0.5 L8.5 5 L0.5 9.5Z" fill="#dedede"/></svg>
<div class="t" style="left:676.8px;top:582.77px;font-size:10.56px;line-height:12.14px;color:#a6a6a6;font-weight:400;">extend_right_factor</div>
<div class="t" style="left:308.2px;width:600px;text-align:right;top:582.77px;font-size:10.56px;line-height:12.14px;color:#e2e2e2;font-weight:400;-webkit-text-stroke:0.25px #e2e2e2">1.00</div>
<div class="a wid" style="left:659.3px;top:600.9px;width:279.4px;height:17.5px;border-radius:8.75px"></div>
<svg class="a" style="left:664.8px;top:604.65px" width="10" height="10" viewBox="0 0 10 10"><path d="M9.2 0.4 L0.2 5 L9.2 9.6Z" fill="#dedede"/></svg>
<svg class="a" style="left:923.7px;top:604.65px" width="9" height="10" viewBox="0 0 9 10"><path d="M0.5 0.5 L8.5 5 L0.5 9.5Z" fill="#dedede"/></svg>
<div class="t" style="left:676.8px;top:603.82px;font-size:10.56px;line-height:12.14px;color:#a6a6a6;font-weight:400;">context_from_mask_extend_factor</div>
<div class="t" style="left:308.2px;width:600px;text-align:right;top:603.82px;font-size:10.56px;line-height:12.14px;color:#e2e2e2;font-weight:400;-webkit-text-stroke:0.25px #e2e2e2">1.20</div>
<div class="a wid" style="left:659.3px;top:621.95px;width:279.4px;height:17.5px;border-radius:8.75px"></div>
<div class="t" style="left:672.3px;top:624.87px;font-size:10.56px;line-height:12.14px;color:#a6a6a6;font-weight:400;">output_resize_to_target_size</div>
<div class="t" style="left:316.7px;width:600px;text-align:right;top:624.87px;font-size:10.56px;line-height:12.14px;color:#e2e2e2;font-weight:400;-webkit-text-stroke:0.25px #e2e2e2">true</div>
<div class="a" style="left:918.8px;top:624.3px;width:12.8px;height:12.8px;border-radius:50%;background:#8ea4ba"></div>
<div class="a wid" style="left:659.3px;top:643px;width:279.4px;height:17.5px;border-radius:8.75px"></div>
<svg class="a" style="left:664.8px;top:646.75px" width="10" height="10" viewBox="0 0 10 10"><path d="M9.2 0.4 L0.2 5 L9.2 9.6Z" fill="#dedede"/></svg>
<svg class="a" style="left:923.7px;top:646.75px" width="9" height="10" viewBox="0 0 9 10"><path d="M0.5 0.5 L8.5 5 L0.5 9.5Z" fill="#dedede"/></svg>
<div class="t" style="left:676.8px;top:645.92px;font-size:10.56px;line-height:12.14px;color:#a6a6a6;font-weight:400;">output_target_width</div>
<div class="t" style="left:308.2px;width:600px;text-align:right;top:645.92px;font-size:10.56px;line-height:12.14px;color:#e2e2e2;font-weight:400;-webkit-text-stroke:0.25px #e2e2e2">1024</div>
<div class="a wid" style="left:659.3px;top:664.05px;width:279.4px;height:17.5px;border-radius:8.75px"></div>
<svg class="a" style="left:664.8px;top:667.8px" width="10" height="10" viewBox="0 0 10 10"><path d="M9.2 0.4 L0.2 5 L9.2 9.6Z" fill="#dedede"/></svg>
<svg class="a" style="left:923.7px;top:667.8px" width="9" height="10" viewBox="0 0 9 10"><path d="M0.5 0.5 L8.5 5 L0.5 9.5Z" fill="#dedede"/></svg>
<div class="t" style="left:676.8px;top:666.97px;font-size:10.56px;line-height:12.14px;color:#a6a6a6;font-weight:400;">output_target_height</div>
<div class="t" style="left:308.2px;width:600px;text-align:right;top:666.97px;font-size:10.56px;line-height:12.14px;color:#e2e2e2;font-weight:400;-webkit-text-stroke:0.25px #e2e2e2">1024</div>
<div class="a wid" style="left:659.3px;top:685.1px;width:279.4px;height:17.5px;border-radius:8.75px"></div>
<svg class="a" style="left:664.8px;top:688.85px" width="10" height="10" viewBox="0 0 10 10"><path d="M9.2 0.4 L0.2 5 L9.2 9.6Z" fill="#dedede"/></svg>
<svg class="a" style="left:923.7px;top:688.85px" width="9" height="10" viewBox="0 0 9 10"><path d="M0.5 0.5 L8.5 5 L0.5 9.5Z" fill="#dedede"/></svg>
<div class="t" style="left:676.8px;top:688.02px;font-size:10.56px;line-height:12.14px;color:#a6a6a6;font-weight:400;">output_padding</div>
<div class="t" style="left:308.2px;width:600px;text-align:right;top:688.02px;font-size:10.56px;line-height:12.14px;color:#e2e2e2;font-weight:400;-webkit-text-stroke:0.25px #e2e2e2">64</div>
<div class="a badge" style="left:810.4px;top:119.3px;width:139px;height:16.5px;line-height:16.5px;font-size:10px">#271 Inpaint-CropAndStitch</div>
<div class="a node" style="left:1042.3px;top:120.8px;width:149.9px;height:24.7px;border-radius:7px"></div>
<div class="a" style="left:1050px;top:128.55px;width:9.2px;height:9.2px;border-radius:50%;background:#6b6b6b"></div>
<div class="t" style="left:1067.8px;top:126.95px;font-size:12.15px;line-height:13.97px;color:#a8a8a8;font-weight:400;">Anything Everywhere</div>
<div class="a" style="left:1037.1px;top:128.5px;width:7px;height:7px;border-radius:50%;background:#6fa46f;border:1.0px solid #11161b;box-sizing:content-box"></div>
<div class="a badge" style="left:1064.4px;top:101px;width:126.2px;height:16.8px;line-height:16.8px;font-size:10px">#275 cg-use-everywhere</div>
<div class="a node" style="left:1058.7px;top:179px;width:136.5px;height:25px;border-radius:7px"></div>
<div class="a" style="left:1067.8px;top:186.9px;width:9.2px;height:9.2px;border-radius:50%;background:#6b6b6b"></div>
<div class="t" style="left:1086px;top:185.3px;font-size:12.15px;line-height:13.97px;color:#a8a8a8;font-weight:400;">Set_1-CROPPED</div>
<div class="a" style="left:1054.5px;top:186.5px;width:7px;height:7px;border-radius:50%;background:#6f9f6f;border:1.0px solid #11161b;box-sizing:content-box"></div>
<div class="a" style="left:1051.8px;top:209px;width:44.2px;height:17px;background:#2c2c2c"></div>
<div class="t" style="left:1058.8px;top:209.59px;font-size:11.4px;line-height:13.11px;color:#a9a9a9;font-weight:400;">0.328s</div>
<div class="a node" style="left:1050.7px;top:227px;width:107.3px;height:25.5px;border-radius:7px"></div>
<div class="a" style="left:1059.1px;top:235.15px;width:9.2px;height:9.2px;border-radius:50%;background:#6b6b6b"></div>
<div class="t" style="left:1077px;top:233.55px;font-size:12.15px;line-height:13.97px;color:#a8a8a8;font-weight:400;">Invert Mask</div>
<div class="a" style="left:1046.2px;top:235px;width:7px;height:7px;border-radius:50%;background:#6fa46f;border:1.0px solid #11161b;box-sizing:content-box"></div>
<div class="a" style="left:1152.8px;top:235px;width:7px;height:7px;border-radius:50%;background:#6fa46f;border:1.0px solid #11161b;box-sizing:content-box"></div>
<div class="a badge" style="left:1104.8px;top:207.5px;width:50.9px;height:16px;line-height:16px;font-size:10px">#332 <svg class="fox" width="10.6" height="10.6" viewBox="0 0 12 12"><path d="M1 0.8 L4.6 3.4 L7.4 3.4 L11 0.8 L11.2 6.8 L6 11.4 L0.8 6.8Z" fill="#f0802e"/><path d="M1.6 1.8 L3.6 3.6 L1.8 4.8Z M10.4 1.8 L8.4 3.6 L10.2 4.8Z" fill="#5a2a10" opacity="0.6"/><path d="M0.8 6.8 C2.5 6.6 4.5 7.4 6 8.4 C7.5 7.4 9.5 6.6 11.2 6.8 L10.6 9.6 C9 11.2 7.5 11.6 6 11.6 C4.5 11.6 3 11.2 1.4 9.6Z" fill="#f8e4dc"/><circle cx="4.1" cy="6" r="0.7" fill="#3a1a0a"/><circle cx="7.9" cy="6" r="0.7" fill="#3a1a0a"/><path d="M6 8.6 L6 10.8" stroke="#5a2a10" stroke-width="0.9"/></svg></div>
<div class="a" style="left:992.4px;top:249.4px;width:44.1px;height:17.6px;background:#2c2c2c"></div>
<div class="t" style="left:999.4px;top:250.59px;font-size:11.4px;line-height:13.11px;color:#a9a9a9;font-weight:400;">1.925s</div>
<div class="a node" style="left:992.4px;top:266px;width:269.4px;height:470px"></div>
<div class="a" style="left:992.4px;top:266px;width:269.4px;height:26.6px;background:#313131;border-radius:0 6px 0 0"></div>
<div class="a" style="left:1000.9px;top:274.7px;width:9.2px;height:9.2px;border-radius:50%;background:#6b6b6b"></div>
<div class="a" style="left:992.4px;top:291px;width:269.4px;height:1px;background:#3b3b3b"></div><div class="a" style="left:992.4px;top:292px;width:269.4px;height:1.2px;background:#2a2a2a"></div>
<div class="t" style="left:1019px;top:274px;font-size:12.15px;line-height:13.97px;color:#a8a8a8;font-weight:400;">Preview Image</div>
<div class="a" style="left:996.8px;top:300px;width:6.4px;height:6.4px;border-radius:50%;background:#6cb6f2;border:1.0px solid #11161b;box-sizing:content-box"></div>
<div class="t" style="left:1009.8px;top:298.17px;font-size:10.56px;line-height:12.14px;color:#b4b4b4;font-weight:400;">images</div>
<div class="a" style="left:1249.8px;top:300px;width:6.4px;height:6.4px;border-radius:50%;background:#8cc43c;border:1.0px solid #11161b;box-sizing:content-box"></div>
<div class="t" style="left:645.2px;width:600px;text-align:right;top:298.17px;font-size:10.56px;line-height:12.14px;color:#b4b4b4;font-weight:400;">image_urls</div>
<svg class="a" style="left:992.2px;top:385px" width="269.5" height="268.5" viewBox="0 0 270 269" preserveAspectRatio="none"><defs><filter id="pcb4" x="-20%" y="-20%" width="140%" height="140%"><feGaussianBlur stdDeviation="1.8"/></filter>
<filter id="pcb6" x="-20%" y="-20%" width="140%" height="140%"><feGaussianBlur stdDeviation="0.8"/></filter>
<radialGradient id="pcface" cx="0.5" cy="0.42" r="0.62"><stop offset="0" stop-color="#f4ded3"/><stop offset="0.6" stop-color="#edd2c4"/><stop offset="1" stop-color="#d6ae9b"/></radialGradient>
<linearGradient id="pchair" x1="0" y1="0" x2="1" y2="0"><stop offset="0" stop-color="#d2ccc6"/><stop offset="0.45" stop-color="#e6e2de"/><stop offset="1" stop-color="#d6d0ca"/></linearGradient>
<linearGradient id="pcneck" x1="0" y1="0" x2="0" y2="1"><stop offset="0" stop-color="#c9a08c"/><stop offset="0.5" stop-color="#e2c0ae"/><stop offset="1" stop-color="#ead0c0"/></linearGradient></defs><rect width="270" height="269" fill="#31262f"/>
<g fill="#201820" filter="url(#pcb6)"><rect y="14" width="270" height="3"/><rect y="54" width="270" height="3"/><rect y="95" width="270" height="3"/><rect y="137" width="270" height="3"/><rect y="177" width="270" height="3"/><rect y="216" width="270" height="3"/><rect y="252" width="270" height="3"/></g>
<g filter="url(#pcb4)">
<path d="M101 0 L159 0 C175 8 185 14 195 25 C210 45 222 70 228 91 C234 115 236 150 231 180 C226 198 215 210 188 224 L177 213 L65 195 C55 205 48 225 40 240 C35 250 20 256 7 253 C2 240 2 230 4 224 C8 200 14 180 22 150 C28 120 34 100 40 80 C48 50 60 25 80 10 C88 5 95 2 101 0Z" fill="url(#pchair)"/>

<g stroke="#b9b1aa" stroke-width="1.6" fill="none" opacity="0.55"><path d="M120 2 C100 20 80 45 62 95 C50 130 40 170 30 220"/><path d="M135 2 C155 15 180 40 200 80 C215 115 222 150 218 190"/><path d="M110 8 C90 30 70 70 55 120 C45 160 35 200 20 245"/><path d="M150 6 C175 25 200 60 215 100"/><path d="M100 15 C80 40 65 80 50 140"/><path d="M45 150 C35 180 28 210 14 240"/></g>
<path d="M82 188 L186 188 L180 269 L72 269Z" fill="url(#pcneck)"/>
<path d="M127 40 C148 40 162 46 172 56 C185 70 192 85 196 100 C201 118 203 140 202 152 C200 170 195 182 188 195 C175 212 155 222 133 222 C110 222 92 210 80 188 C72 175 67 165 67 150 C66 130 67 110 72 92 C78 75 86 62 95 54 C105 45 115 40 127 40Z" fill="url(#pcface)"/>
<ellipse cx="63" cy="166" rx="6" ry="10" fill="#e0b8a2"/><ellipse cx="206" cy="162" rx="6" ry="10" fill="#dab29e"/>
<path d="M0 269 L0 254 C25 248 50 244 75 244 L100 269Z" fill="#e6c4b2"/>
<path d="M173 231 L188 224 L207 269 L173 269Z" fill="#8e2c26"/>
</g>
<g filter="url(#pcb6)">
<path d="M78 123.5 Q96 113 114 120.5 Q97 128.5 78 123.5Z" fill="#e6d8d2"/>
<circle cx="98" cy="120.5" r="5.6" fill="#6a7e76"/><circle cx="98" cy="120.5" r="2.2" fill="#1e1e1e"/>
<path d="M72 126 Q80 118 88 116 Q102 111 116 120" stroke="#1e1a1a" stroke-width="2.8" fill="none"/>
<path d="M80 125 Q96 129 112 122" stroke="#a88078" stroke-width="1" fill="none"/>
<path d="M147 118 Q164 109 182 118.5 Q164 125.5 147 118Z" fill="#e6d8d2"/>
<circle cx="162" cy="117.5" r="5.6" fill="#6a7e76"/><circle cx="162" cy="117.5" r="2.2" fill="#1e1e1e"/>
<path d="M145 118 Q160 107 176 112 Q182 114 189 120" stroke="#1e1a1a" stroke-width="2.8" fill="none"/>
<path d="M149 120 Q164 126 180 120" stroke="#a88078" stroke-width="1" fill="none"/>
<path d="M73 108 Q92 99 113 104" stroke="#8e6254" stroke-width="4.6" fill="none"/>
<path d="M144 103 Q165 96 185 102.5" stroke="#8e6254" stroke-width="4.6" fill="none"/>
<path d="M123 128 Q122 145 118 151" stroke="#cfa898" stroke-width="3" fill="none" opacity="0.8"/><path d="M142 128 Q143 145 147 151" stroke="#d8b4a4" stroke-width="2.5" fill="none" opacity="0.6"/>
<ellipse cx="132.5" cy="150" rx="7" ry="5" fill="#f2dcd2"/>
<path d="M118 156 Q124 152 128 157 M137 157 Q141 152 147 156" stroke="#a87a6c" stroke-width="2.2" fill="none"/>
<path d="M106 184 Q118 175 132 178 Q146 175 158 184 Q132 187 106 184Z" fill="#b86468"/>
<path d="M106 184 Q132 189 158 184 Q150 198 132 198 Q114 198 106 184Z" fill="#d48c90"/>
</g></svg>
<div class="t" style="left:827px;width:600px;text-align:center;top:654.89px;font-size:8.8px;line-height:10.12px;color:#a0a0a0;font-weight:400;">1024 × 1024</div>
<div class="a badge" style="left:1208.8px;top:246.4px;width:50.7px;height:17.4px;line-height:17.4px;font-size:10px">#307 <svg class="fox" width="10.6" height="10.6" viewBox="0 0 12 12"><path d="M1 0.8 L4.6 3.4 L7.4 3.4 L11 0.8 L11.2 6.8 L6 11.4 L0.8 6.8Z" fill="#f0802e"/><path d="M1.6 1.8 L3.6 3.6 L1.8 4.8Z M10.4 1.8 L8.4 3.6 L10.2 4.8Z" fill="#5a2a10" opacity="0.6"/><path d="M0.8 6.8 C2.5 6.6 4.5 7.4 6 8.4 C7.5 7.4 9.5 6.6 11.2 6.8 L10.6 9.6 C9 11.2 7.5 11.6 6 11.6 C4.5 11.6 3 11.2 1.4 9.6Z" fill="#f8e4dc"/><circle cx="4.1" cy="6" r="0.7" fill="#3a1a0a"/><circle cx="7.9" cy="6" r="0.7" fill="#3a1a0a"/><path d="M6 8.6 L6 10.8" stroke="#5a2a10" stroke-width="0.9"/></svg></div>
<div class="a" style="left:1327.8px;top:147.4px;width:45.2px;height:18.4px;background:#2c2c2c"></div>
<div class="t" style="left:1334.8px;top:149.39px;font-size:11.4px;line-height:13.11px;color:#a9a9a9;font-weight:400;">1.778s</div>
<div class="a node" style="left:1327.8px;top:164.8px;width:382.8px;height:471.5px"></div>
<div class="a" style="left:1327.8px;top:164.8px;width:382.8px;height:26.6px;background:#313131;border-radius:0 6px 0 0"></div>
<div class="a" style="left:1335.7px;top:173.5px;width:9.2px;height:9.2px;border-radius:50%;background:#6b6b6b"></div>
<div class="a" style="left:1327.8px;top:189.8px;width:382.8px;height:1px;background:#3b3b3b"></div><div class="a" style="left:1327.8px;top:190.8px;width:382.8px;height:1.2px;background:#2a2a2a"></div>
<div class="t" style="left:1353.5px;top:172.8px;font-size:12.15px;line-height:13.97px;color:#a8a8a8;font-weight:400;">ImageAndMaskPreview</div>
<div class="t" style="left:1397.8px;width:600px;text-align:center;top:170.02px;font-size:13px;line-height:14.95px;color:#f0b42c;font-weight:700;">?</div>
<div class="a" style="left:1331.3px;top:198.2px;width:9px;height:9px;border-radius:50%;background:#6cb6f2;box-shadow:0 0 0 0.6px rgba(10,10,10,0.6)"></div>
<div class="a" style="left:1334.45px;top:201.35px;width:2.7px;height:2.7px;border-radius:50%;background:#0a2a48"></div>
<div class="t" style="left:1344.6px;top:196.67px;font-size:10.56px;line-height:12.14px;color:#b4b4b4;font-weight:400;">image</div>
<div class="a" style="left:1331.3px;top:215.9px;width:9px;height:9px;border-radius:50%;background:#88cc88;box-shadow:0 0 0 0.6px rgba(10,10,10,0.6)"></div>
<div class="a" style="left:1334.45px;top:219.05px;width:2.7px;height:2.7px;border-radius:50%;background:#0e2a0e"></div>
<div class="t" style="left:1344.6px;top:214.37px;font-size:10.56px;line-height:12.14px;color:#b4b4b4;font-weight:400;">mask</div>
<div class="a" style="left:1698.8px;top:198.5px;width:6.4px;height:6.4px;border-radius:50%;background:#6cb6f2;border:1.0px solid #11161b;box-sizing:content-box"></div>
<div class="t" style="left:1094.2px;width:600px;text-align:right;top:196.67px;font-size:10.56px;line-height:12.14px;color:#b4b4b4;font-weight:400;">composite</div>
<div class="a wid" style="left:1340.3px;top:230.7px;width:357.4px;height:17.5px;border-radius:8.75px"></div>
<svg class="a" style="left:1345.8px;top:234.45px" width="10" height="10" viewBox="0 0 10 10"><path d="M9.2 0.4 L0.2 5 L9.2 9.6Z" fill="#dedede"/></svg>
<svg class="a" style="left:1682.7px;top:234.45px" width="9" height="10" viewBox="0 0 9 10"><path d="M0.5 0.5 L8.5 5 L0.5 9.5Z" fill="#5e5e5e"/></svg>
<div class="t" style="left:1357.8px;top:233.62px;font-size:10.56px;line-height:12.14px;color:#a6a6a6;font-weight:400;">mask_opacity</div>
<div class="t" style="left:1067.2px;width:600px;text-align:right;top:233.62px;font-size:10.56px;line-height:12.14px;color:#e2e2e2;font-weight:400;-webkit-text-stroke:0.25px #e2e2e2">1.00</div>
<div class="a wid" style="left:1340.3px;top:251.8px;width:357.4px;height:17.5px;border-radius:8.75px"></div>
<div class="t" style="left:1353.3px;top:254.72px;font-size:10.56px;line-height:12.14px;color:#a6a6a6;font-weight:400;">mask_color</div>
<div class="t" style="left:1084.7px;width:600px;text-align:right;top:254.72px;font-size:10.56px;line-height:12.14px;color:#e2e2e2;font-weight:400;-webkit-text-stroke:0.25px #e2e2e2">255, 255, 255</div>
<div class="a wid" style="left:1340.3px;top:272.9px;width:357.4px;height:17.5px;border-radius:8.75px"></div>
<div class="t" style="left:1353.3px;top:275.82px;font-size:10.56px;line-height:12.14px;color:#a6a6a6;font-weight:400;">pass_through</div>
<div class="t" style="left:1075.7px;width:600px;text-align:right;top:275.82px;font-size:10.56px;line-height:12.14px;color:#8a8a8a;font-weight:400;">false</div>
<div class="a" style="left:1677.8px;top:275.25px;width:12.8px;height:12.8px;border-radius:50%;background:#2c2c2c"></div>
<svg class="a" style="left:1354.6px;top:293.7px" width="330" height="330" viewBox="0 0 330 330" preserveAspectRatio="none"><defs><filter id="pmb4" x="-20%" y="-20%" width="140%" height="140%"><feGaussianBlur stdDeviation="1.8"/></filter>
<filter id="pmb6" x="-20%" y="-20%" width="140%" height="140%"><feGaussianBlur stdDeviation="0.8"/></filter>
<radialGradient id="pmface" cx="0.5" cy="0.42" r="0.62"><stop offset="0" stop-color="#f4ded3"/><stop offset="0.6" stop-color="#edd2c4"/><stop offset="1" stop-color="#d6ae9b"/></radialGradient>
<linearGradient id="pmhair" x1="0" y1="0" x2="1" y2="0"><stop offset="0" stop-color="#d2ccc6"/><stop offset="0.45" stop-color="#e6e2de"/><stop offset="1" stop-color="#d6d0ca"/></linearGradient>
<linearGradient id="pmneck" x1="0" y1="0" x2="0" y2="1"><stop offset="0" stop-color="#c9a08c"/><stop offset="0.5" stop-color="#e2c0ae"/><stop offset="1" stop-color="#ead0c0"/></linearGradient></defs>
<defs><filter id="pmmb" x="-30%" y="-30%" width="160%" height="160%"><feGaussianBlur stdDeviation="4.5"/></filter>
<mask id="pmmask" maskUnits="userSpaceOnUse" x="0" y="0" width="330" height="330"><rect width="330" height="330" fill="#000"/><path filter="url(#pmmb)" d="M166 30 C195 32 215 44 230 64 C245 82 255 102 262 132 C270 160 280 175 282 200 C282 222 270 237 256 252 C240 272 215 292 195 299 C175 304 150 304 135 299 C115 292 100 280 89 266 C75 251 58 239 52 222 C47 205 47 188 53 165 C58 140 65 112 76 84 C90 52 125 32 166 30Z" fill="#fff"/></mask></defs>
<rect width="330" height="330" fill="#ffffff"/>
<g mask="url(#pmmask)"><g transform="translate(-2,0.6) scale(1.2245)"><rect width="270" height="269" fill="#31262f"/>
<g fill="#201820" filter="url(#pmb6)"><rect y="14" width="270" height="3"/><rect y="54" width="270" height="3"/><rect y="95" width="270" height="3"/><rect y="137" width="270" height="3"/><rect y="177" width="270" height="3"/><rect y="216" width="270" height="3"/><rect y="252" width="270" height="3"/></g>
<g filter="url(#pmb4)">
<path d="M101 0 L159 0 C175 8 185 14 195 25 C210 45 222 70 228 91 C234 115 236 150 231 180 C226 198 215 210 188 224 L177 213 L65 195 C55 205 48 225 40 240 C35 250 20 256 7 253 C2 240 2 230 4 224 C8 200 14 180 22 150 C28 120 34 100 40 80 C48 50 60 25 80 10 C88 5 95 2 101 0Z" fill="url(#pmhair)"/>

<g stroke="#b9b1aa" stroke-width="1.6" fill="none" opacity="0.55"><path d="M120 2 C100 20 80 45 62 95 C50 130 40 170 30 220"/><path d="M135 2 C155 15 180 40 200 80 C215 115 222 150 218 190"/><path d="M110 8 C90 30 70 70 55 120 C45 160 35 200 20 245"/><path d="M150 6 C175 25 200 60 215 100"/><path d="M100 15 C80 40 65 80 50 140"/><path d="M45 150 C35 180 28 210 14 240"/></g>
<path d="M82 188 L186 188 L180 269 L72 269Z" fill="url(#pmneck)"/>
<path d="M127 40 C148 40 162 46 172 56 C185 70 192 85 196 100 C201 118 203 140 202 152 C200 170 195 182 188 195 C175 212 155 222 133 222 C110 222 92 210 80 188 C72 175 67 165 67 150 C66 130 67 110 72 92 C78 75 86 62 95 54 C105 45 115 40 127 40Z" fill="url(#pmface)"/>
<ellipse cx="63" cy="166" rx="6" ry="10" fill="#e0b8a2"/><ellipse cx="206" cy="162" rx="6" ry="10" fill="#dab29e"/>
<path d="M0 269 L0 254 C25 248 50 244 75 244 L100 269Z" fill="#e6c4b2"/>

</g>
<g filter="url(#pmb6)">
<path d="M78 123.5 Q96 113 114 120.5 Q97 128.5 78 123.5Z" fill="#e6d8d2"/>
<circle cx="98" cy="120.5" r="5.6" fill="#6a7e76"/><circle cx="98" cy="120.5" r="2.2" fill="#1e1e1e"/>
<path d="M72 126 Q80 118 88 116 Q102 111 116 120" stroke="#1e1a1a" stroke-width="2.8" fill="none"/>
<path d="M80 125 Q96 129 112 122" stroke="#a88078" stroke-width="1" fill="none"/>
<path d="M147 118 Q164 109 182 118.5 Q164 125.5 147 118Z" fill="#e6d8d2"/>
<circle cx="162" cy="117.5" r="5.6" fill="#6a7e76"/><circle cx="162" cy="117.5" r="2.2" fill="#1e1e1e"/>
<path d="M145 118 Q160 107 176 112 Q182 114 189 120" stroke="#1e1a1a" stroke-width="2.8" fill="none"/>
<path d="M149 120 Q164 126 180 120" stroke="#a88078" stroke-width="1" fill="none"/>
<path d="M73 108 Q92 99 113 104" stroke="#8e6254" stroke-width="4.6" fill="none"/>
<path d="M144 103 Q165 96 185 102.5" stroke="#8e6254" stroke-width="4.6" fill="none"/>
<path d="M123 128 Q122 145 118 151" stroke="#cfa898" stroke-width="3" fill="none" opacity="0.8"/><path d="M142 128 Q143 145 147 151" stroke="#d8b4a4" stroke-width="2.5" fill="none" opacity="0.6"/>
<ellipse cx="132.5" cy="150" rx="7" ry="5" fill="#f2dcd2"/>
<path d="M118 156 Q124 152 128 157 M137 157 Q141 152 147 156" stroke="#a87a6c" stroke-width="2.2" fill="none"/>
<path d="M106 184 Q118 175 132 178 Q146 175 158 184 Q132 187 106 184Z" fill="#b86468"/>
<path d="M106 184 Q132 189 158 184 Q150 198 132 198 Q114 198 106 184Z" fill="#d48c90"/>
</g></g></g></svg>
<div class="t" style="left:1219px;width:600px;text-align:center;top:624.69px;font-size:8.8px;line-height:10.12px;color:#a0a0a0;font-weight:400;">1024 × 1024</div>
<div class="a badge" style="left:1630px;top:145px;width:79px;height:16.8px;line-height:16.8px;font-size:10px">#331 KJNodes</div>
</div></div>
</body></html>
